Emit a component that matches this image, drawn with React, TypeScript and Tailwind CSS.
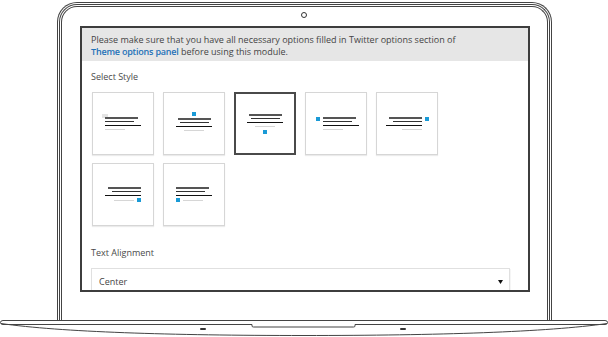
import React from 'react';

const Lines: React.FC<{ align?: 'start' | 'center' | 'end'; last?: React.ReactNode }> = ({ align = 'center', last }) => {
  const al = align === 'start' ? 'items-start' : align === 'end' ? 'items-end' : 'items-center';
  return (
    <div className={`flex flex-col ${al}`}>
      <div className="w-[33px] h-[2px] bg-[#555]" />
      <div className="w-[29px] h-px bg-[#333] mt-[2px]" />
      <div className="w-[36px] h-px bg-[#111] mt-[3px]" />
      {last ?? <div className="w-[20px] h-px bg-[#d6d6d6] mt-[3px]" />}
    </div>
  );
};

const Dot = () => <div className="w-[4px] h-[4px] bg-[#1a9ad6] shrink-0" />;

const Tile: React.FC<{ selected?: boolean; children: React.ReactNode; extra?: string }> = ({ selected, children, extra = '' }) => (
  <div
    className={`w-[62px] h-[63px] flex items-center justify-center bg-white ${
      selected ? 'border-2 border-[#4a4a4a]' : 'border border-[#d6d6d6] shadow-[0_1px_1px_rgba(0,0,0,0.08)]'
    } ${extra}`}
  >
    {children}
  </div>
);

export default function App() {
  return (
    <div className="w-[608px] h-[337px] bg-white overflow-hidden flex flex-col font-['Open_Sans',sans-serif] text-[#4a4a4a]">
      {/* lid */}
      <div className="mx-auto mt-[2px] w-[495px] h-[318px] rounded-t-[20px] border border-b-0 border-[#444] px-px pt-px">
        <div className="h-full rounded-t-[18px] border border-b-0 border-[#444] px-px pt-px">
          <div className="h-full rounded-t-[16px] border border-b-0 border-[#444] flex flex-col items-center">
            <div className="mt-[5px] w-[6px] h-[6px] rounded-full border border-[#333]" />
            {/* screen */}
            <div className="mt-[8px] ml-[2px] w-[450px] h-[266px] border-2 border-[#3d3d3d] overflow-hidden flex flex-col">
              <div className="bg-[#e6e6e6] px-[9px] pt-[6px] pb-[3px] text-[9px] leading-[12px] text-[#444]">
                <p>Please make sure that you have all necessary options filled in Twitter options section of</p>
                <p>
                  <span className="text-[#1f72b8] font-semibold tracking-[-0.2px]">Theme options panel</span> before using this module.
                </p>
              </div>

              <div className="px-[9px] mt-[10px] text-[9px] leading-[12px]">Select Style</div>

              <div className="pl-[10px] mt-[9px] flex flex-col gap-[8px]">
                <div className="flex gap-[9px]">
                  <Tile>
                    <div className="relative">
                      <div className="absolute -left-[3px] -top-[3px] w-[6px] h-[4px] bg-[#e4e4e4]" />
                      <div className="relative">
                        <Lines align="start" />
                      </div>
                    </div>
                  </Tile>
                  <Tile extra="pb-[5px]">
                    <div className="flex flex-col items-center">
                      <div className="mb-[2px]">
                        <Dot />
                      </div>
                      <Lines align="center" />
                    </div>
                  </Tile>
                  <Tile selected>
                    <div className="flex flex-col items-center">
                      <Lines align="center" />
                      <div className="mt-[3px]">
                        <Dot />
                      </div>
                    </div>
                  </Tile>
                  <Tile>
                    <div className="flex items-start gap-[3px] pl-[2px]">
                      <Dot />
                      <Lines align="start" />
                    </div>
                  </Tile>
                  <Tile>
                    <div className="flex items-start gap-[3px]">
                      <Lines align="end" />
                      <Dot />
                    </div>
                  </Tile>
                </div>
                <div className="flex gap-[9px]">
                  <Tile>
                    <Lines
                      align="end"
                      last={
                        <div className="flex items-center gap-[3px] mt-[2px]">
                          <div className="w-[20px] h-px bg-[#d6d6d6]" />
                          <Dot />
                        </div>
                      }
                    />
                  </Tile>
                  <Tile>
                    <Lines
                      align="start"
                      last={
                        <div className="flex items-center gap-[3px] mt-[2px]">
                          <Dot />
                          <div className="w-[20px] h-px bg-[#d6d6d6]" />
                        </div>
                      }
                    />
                  </Tile>
                </div>
              </div>

              <div className="px-[9px] mt-[21px] text-[9px] leading-[12px]">Text Alignment</div>

              <div className="ml-[9px] w-[419px] mt-[9px] h-[28px] shrink-0 border border-[#e0e0e0] shadow-[1px_1px_0_rgba(0,0,0,0.04)] flex items-center justify-between pl-[7px] pr-[6px] text-[9px] text-[#444]">
                <span>Center</span>
                <svg width="5" height="4" viewBox="0 0 5 4">
                  <polygon points="0,0 5,0 2.5,4" fill="#111" />
                </svg>
              </div>
            </div>
          </div>
        </div>
      </div>

      {/* base */}
      <svg width="608" height="17" viewBox="0 0 608 17" className="shrink-0">
        <g fill="none" stroke="#444" strokeWidth="1">
          <path d="M3 0.5 H605 Q607.5 0.5 607.5 2.5 Q607.5 4.5 605 4.5" />
          <path d="M3 0.5 Q0.5 0.5 0.5 2.5 Q0.5 4.5 3 4.5" />
          <path d="M3 4.5 H252 V6 Q252 7 253.5 7 H353.5 Q355 7 355 6 V4.5 H605" />
          <path d="M1 3.5 C 60 12, 170 15.5, 304 15.5 C 438 15.5, 548 12, 607 3.5" />
        </g>
        <rect x="200" y="8" width="6" height="2" rx="1" fill="#333" />
        <rect x="400" y="8" width="6" height="2" rx="1" fill="#333" />
      </svg>
    </div>
  );
}
